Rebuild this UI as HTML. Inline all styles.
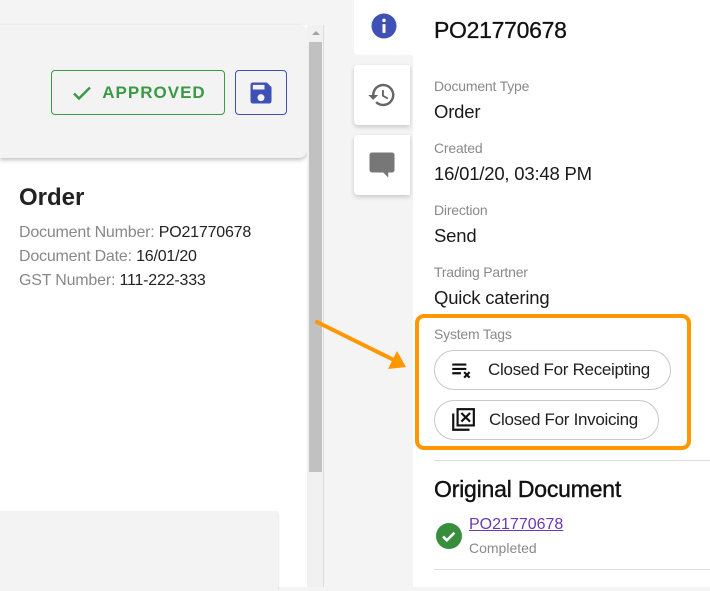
<!DOCTYPE html>
<html><head><meta charset="utf-8"><style>
*{margin:0;padding:0;box-sizing:border-box}
body{width:710px;height:587px;overflow:hidden;background:#f4f4f4;font-family:"Liberation Sans",Arial,sans-serif;position:relative;color:#212121}
.a{position:absolute}
.lbl{font-size:14px;color:#8a8a8a;letter-spacing:-0.2px}
.val{font-size:18.5px;color:#1a1a1a;letter-spacing:-0.2px}
.chip{position:absolute;left:434px;height:40px;border:1px solid #c8c8c8;border-radius:20px;font-size:17px;color:#222;display:flex;align-items:center;letter-spacing:-0.3px}
</style></head><body>
<div class="a" style="left:0;top:25px;width:307px;height:562px;background:#fff"></div>
<div class="a" style="left:0;top:25px;width:307px;height:133px;background:#f3f3f3;border-radius:0 8px 8px 0;box-shadow:0 2px 4px rgba(0,0,0,.25)"></div>
<div class="a" style="left:51px;top:70px;width:174px;height:45px;border:1px solid #3a9a44;border-radius:4px;color:#3a9a44;font-size:17px;font-weight:bold;letter-spacing:1px;display:flex;align-items:center;justify-content:center">
<svg width="24" height="24" viewBox="0 0 24 24" style="margin-right:8px"><path d="M4 12.5l5 5L20 6.5" fill="none" stroke="#3a9a44" stroke-width="2.4"/></svg>APPROVED</div>
<div class="a" style="left:235px;top:70px;width:52px;height:45px;border:1px solid #3f51b5;border-radius:4px;display:flex;align-items:center;justify-content:center">
<svg width="28" height="28" viewBox="0 0 24 24"><path d="M17 3H5a2 2 0 0 0-2 2v14a2 2 0 0 0 2 2h14a2 2 0 0 0 2-2V7l-4-4zm-5 16a3 3 0 1 1 0-6 3 3 0 0 1 0 6zm3-10H5V5h10v4z" fill="#3f51b5"/></svg></div>
<div class="a" style="left:19px;top:184px;font-size:24px;font-weight:bold;color:#222">Order</div>
<div class="a" style="left:19px;top:221px;font-size:16px;line-height:24px;color:#888;letter-spacing:-0.2px">Document Number: <span style="color:#222">PO21770678</span><br>Document Date: <span style="color:#222">16/01/20</span><br>GST Number: <span style="color:#222">111-222-333</span></div>
<div class="a" style="left:0;top:511px;width:278px;height:80px;background:#f3f3f3;border-radius:0 4px 0 0;box-shadow:1px 0 1px rgba(0,0,0,.08)"></div>
<div class="a" style="left:307px;top:25px;width:17px;height:562px;background:#f1f1f1;border-right:1px solid #ddd"></div>
<div class="a" style="left:309px;top:42px;width:13px;height:430px;background:#c1c1c1"></div>
<div class="a" style="left:312px;top:31px;width:0;height:0;border-left:4px solid transparent;border-right:4px solid transparent;border-bottom:4px solid #a3a3a3"></div>
<div class="a" style="left:354px;top:0;width:60px;height:55px;background:#fff;border-radius:0 0 0 4px;display:flex;align-items:center;justify-content:center;padding-bottom:4px">
<svg width="30" height="30" viewBox="0 0 24 24"><circle cx="12" cy="12" r="10" fill="#3f51b5"/><rect x="10.8" y="10.5" width="2.4" height="7" fill="#fff"/><circle cx="12" cy="7.5" r="1.4" fill="#fff"/></svg></div>
<div class="a" style="left:354px;top:65px;width:56px;height:60px;background:#fff;border-radius:4px 0 0 4px;box-shadow:0 2px 5px rgba(0,0,0,.18);display:flex;align-items:center;justify-content:center">
<svg width="30" height="30" viewBox="0 0 24 24"><path d="M13 3a9 9 0 0 0-9 9H1l3.9 3.9L9 12H6a7 7 0 1 1 2.05 4.95l-1.42 1.42A9 9 0 1 0 13 3zm-1 5v5l4.25 2.52.77-1.28-3.52-2.09V8H12z" fill="#666"/></svg></div>
<div class="a" style="left:354px;top:135px;width:56px;height:60px;background:#fff;border-radius:4px 0 0 4px;box-shadow:0 2px 5px rgba(0,0,0,.18);display:flex;align-items:center;justify-content:center">
<svg width="30" height="30" viewBox="0 0 24 24"><path d="M20 2H4a2 2 0 0 0-2 2v12a2 2 0 0 0 2 2h9l4 4v-4h3a2 2 0 0 0 2-2V4a2 2 0 0 0-2-2z" fill="#777"/></svg></div>
<div class="a" style="left:413px;top:0;width:297px;height:587px;background:#fff"></div>
<div class="a" style="left:434px;top:17px;font-size:23px;color:#111;letter-spacing:-0.3px;-webkit-text-stroke:0.3px #111">PO21770678</div>
<div class="a lbl" style="left:434px;top:78px">Document Type</div>
<div class="a val" style="left:434px;top:101px">Order</div>
<div class="a lbl" style="left:434px;top:140px">Created</div>
<div class="a val" style="left:434px;top:163px">16/01/20, 03:48 PM</div>
<div class="a lbl" style="left:434px;top:202px">Direction</div>
<div class="a val" style="left:434px;top:225px">Send</div>
<div class="a lbl" style="left:434px;top:264px">Trading Partner</div>
<div class="a val" style="left:434px;top:287px">Quick catering</div>
<div class="a" style="left:415px;top:314px;width:276px;height:136px;border:4px solid #ff9800;border-radius:9px"></div>
<div class="a lbl" style="left:434px;top:326px">System Tags</div>
<div class="chip" style="top:350px;width:237px"><svg width="26" height="26" viewBox="0 0 24 24" style="margin:0 13px 0 14px"><path d="M3 7h13M3 11h13M3 15h8" stroke="#111" stroke-width="2"/><path d="M14 14l5 5M19 14l-5 5" stroke="#111" stroke-width="2"/></svg>Closed For Receipting</div>
<div class="chip" style="top:400px;width:225px"><svg width="26" height="26" viewBox="0 0 24 24" style="margin:0 13px 0 15px"><path d="M3 6v15h15" fill="none" stroke="#111" stroke-width="2"/><rect x="7" y="2" width="15" height="15" fill="none" stroke="#111" stroke-width="2"/><path d="M10.5 5.5l8 8M18.5 5.5l-8 8" stroke="#111" stroke-width="2"/></svg>Closed For Invoicing</div>
<div class="a" style="left:434px;top:460px;width:276px;height:1px;background:#ddd"></div>
<div class="a" style="left:434px;top:476px;font-size:23px;color:#111;letter-spacing:-0.2px;-webkit-text-stroke:0.4px #111">Original Document</div>
<svg class="a" style="left:436px;top:523px" width="26" height="26" viewBox="0 0 24 24"><circle cx="12" cy="12" r="12" fill="#388e3c"/><path d="M6.5 12.5l3.5 3.5 7-7" fill="none" stroke="#fff" stroke-width="2.4"/></svg>
<div class="a" style="left:469px;top:516px;font-size:16px;color:#6a3ab2;text-decoration:underline">PO21770678</div>
<div class="a" style="left:469px;top:540px;font-size:14px;color:#8a8a8a">Completed</div>
<div class="a" style="left:434px;top:569px;width:276px;height:1px;background:#ddd"></div>
<svg class="a" style="left:310px;top:315px" width="105" height="60" viewBox="0 0 105 60"><path d="M7 7L86 46" stroke="#ff9800" stroke-width="4" stroke-linecap="round"/><path d="M96 52L78 54L87 36z" fill="#ff9800"/></svg>
</body></html>
